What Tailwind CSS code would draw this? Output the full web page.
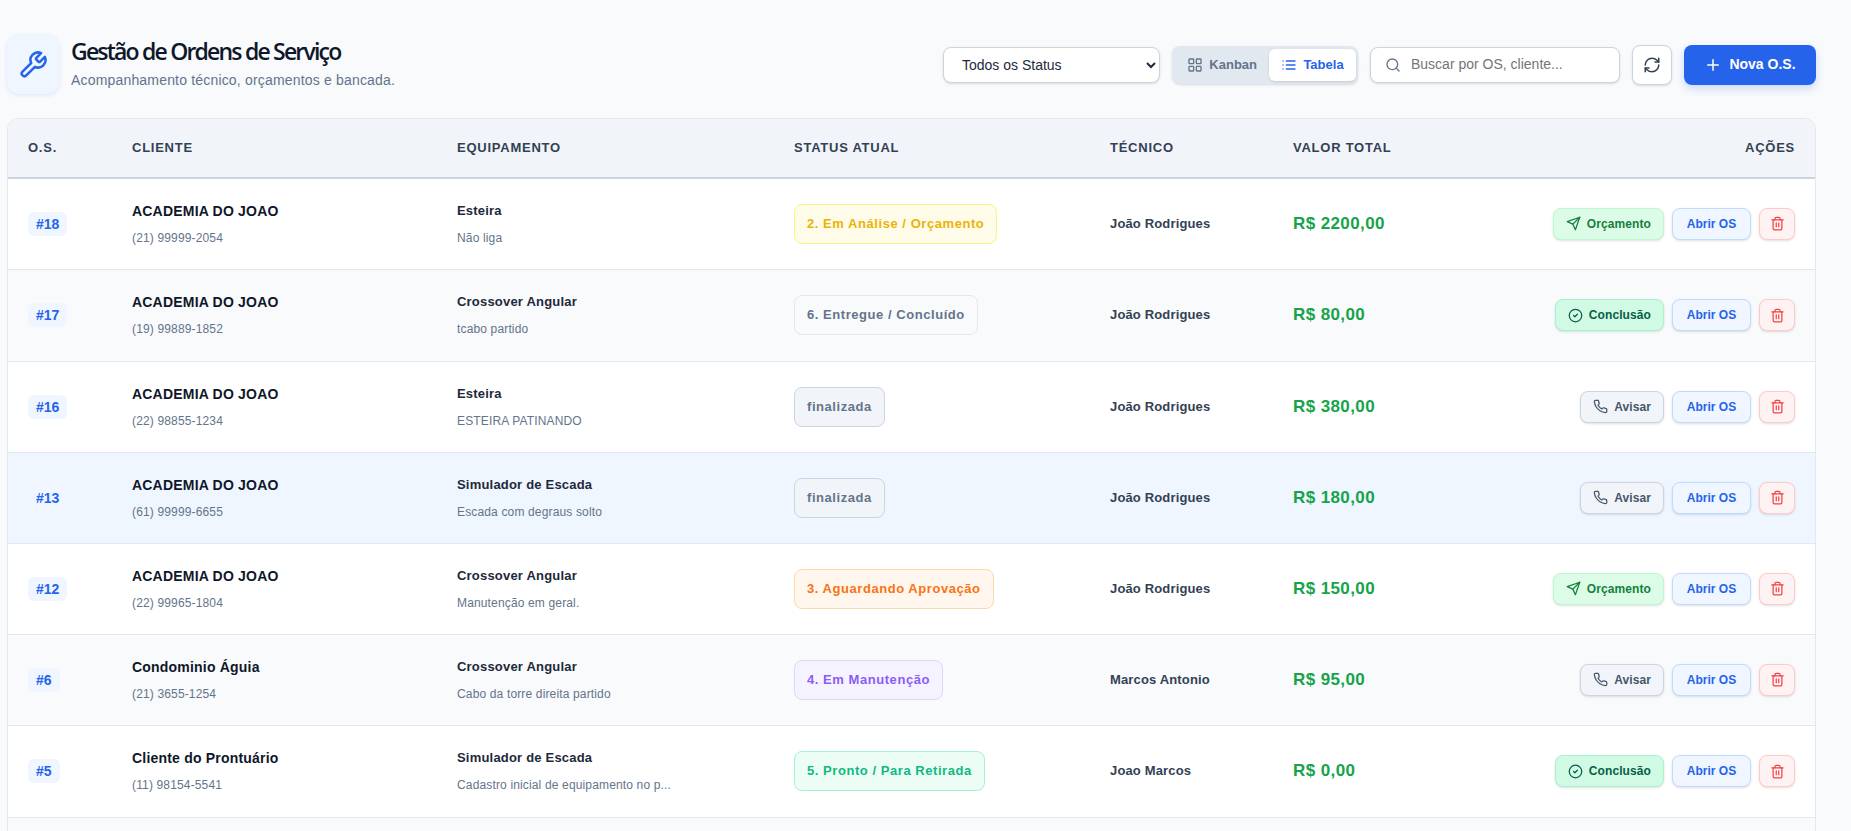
<!DOCTYPE html>
<html lang="pt-BR">
<head>
<meta charset="utf-8">
<title>Gestão de Ordens de Serviço</title>
<script src="https://cdn.jsdelivr.net/npm/@tailwindcss/browser@4"></script>
</head>
<body class="h-screen overflow-hidden bg-[#f8fafc] font-['Liberation_Sans',Arial,sans-serif]">
<svg class="hidden" xmlns="http://www.w3.org/2000/svg">
<symbol id="send" viewBox="0 0 24 24"><path d="m22 2-7 20-4-9-9-4Z"/><path d="M22 2 11 13"/></symbol>
<symbol id="check" viewBox="0 0 24 24"><circle cx="12" cy="12" r="10"/><path d="m9 12 2 2 4-4"/></symbol>
<symbol id="phone" viewBox="0 0 24 24"><path d="M22 16.92v3a2 2 0 0 1-2.18 2 19.79 19.79 0 0 1-8.63-3.07 19.5 19.5 0 0 1-6-6 19.79 19.79 0 0 1-3.07-8.67A2 2 0 0 1 4.11 2h3a2 2 0 0 1 2 1.72 12.84 12.84 0 0 0 .7 2.81 2 2 0 0 1-.45 2.11L8.09 9.91a16 16 0 0 0 6 6l1.27-1.27a2 2 0 0 1 2.11-.45 12.84 12.84 0 0 0 2.81.7A2 2 0 0 1 22 16.92z"/></symbol>
<symbol id="trash" viewBox="0 0 24 24"><path d="M3 6h18"/><path d="M19 6v14c0 1-1 2-2 2H7c-1 0-2-1-2-2V6"/><path d="M8 6V4c0-1 1-2 2-2h4c1 0 2 1 2 2v2"/><path d="M10 11v6"/><path d="M14 11v6"/></symbol>
</svg>
<div class="pl-[7px] pr-[35px] pt-[35px]">
  <header class="flex items-center justify-between h-[59px]">
    <div class="flex items-center gap-[12px]">
      <div class="flex h-[59px] w-[52px] items-center justify-center rounded-[12px] bg-[#eff6ff] shadow-[0_1px_4px_rgba(37,99,235,0.14)]">
        <svg class="h-[30px] w-[30px] text-[#2563eb]" viewBox="0 0 24 24" fill="none" stroke="currentColor" stroke-width="2" stroke-linecap="round" stroke-linejoin="round"><path d="M14.7 6.3a1 1 0 0 0 0 1.4l1.6 1.6a1 1 0 0 0 1.4 0l3.77-3.77a6 6 0 0 1-7.94 7.94l-6.91 6.91a2.12 2.12 0 0 1-3-3l6.91-6.91a6 6 0 0 1 7.94-7.94l-3.76 3.76z"/></svg>
      </div>
      <div class="pb-[2px]">
        <h1 class="font-['Open_Sans',sans-serif] text-[23px] leading-[26px] font-semibold tracking-[-1.8px] text-[#0f172a]">Gestão de Ordens de Serviço</h1>
        <p class="mt-[7px] text-[14px] leading-[18px] tracking-[0.18px] text-[#64748b]">Acompanhamento técnico, orçamentos e bancada.</p>
      </div>
    </div>
    <div class="flex items-center gap-[12px]">
      <select class="h-[36px] w-[217px] rounded-[8px] border border-[#cbd5e1] bg-white pl-[14px] pr-1 text-[14px] text-[#1e293b] shadow-sm">
        <option>Todos os Status</option>
      </select>
      <div class="flex h-[38px] w-[186px] items-center justify-end gap-[2px] rounded-[8px] bg-[#e2e8f0] p-[2px] shadow-sm">
        <button class="flex h-[32px] items-center gap-[6px] px-[10px] text-[13px] font-bold text-[#64748b]">
          <svg class="h-[16px] w-[16px]" viewBox="0 0 24 24" fill="none" stroke="currentColor" stroke-width="2" stroke-linecap="round" stroke-linejoin="round"><rect x="3" y="3" width="7" height="7" rx="1"/><rect x="14" y="3" width="7" height="7" rx="1"/><rect x="14" y="14" width="7" height="7" rx="1"/><rect x="3" y="14" width="7" height="7" rx="1"/></svg>
          Kanban
        </button>
        <button class="flex h-[32px] w-[87px] items-center justify-center gap-[6px] rounded-[6px] bg-white text-[13px] font-bold text-[#2563eb] shadow-sm">
          <svg class="h-[16px] w-[16px]" viewBox="0 0 24 24" fill="none" stroke="currentColor" stroke-width="2" stroke-linecap="round" stroke-linejoin="round"><path d="M3 12h.01"/><path d="M3 18h.01"/><path d="M3 6h.01"/><path d="M8 12h13"/><path d="M8 18h13"/><path d="M8 6h13"/></svg>
          Tabela
        </button>
      </div>
      <label class="flex h-[36px] w-[250px] items-center gap-[10px] rounded-[8px] border border-[#cbd5e1] bg-white pl-[14px] shadow-sm">
        <svg class="h-[16px] w-[16px] shrink-0 text-[#64748b]" viewBox="0 0 24 24" fill="none" stroke="currentColor" stroke-width="2" stroke-linecap="round" stroke-linejoin="round"><circle cx="11" cy="11" r="8"/><path d="m21 21-4.3-4.3"/></svg>
        <input class="w-full bg-transparent text-[14px] outline-none placeholder:text-[#757575]" placeholder="Buscar por OS, cliente...">
      </label>
      <button class="flex h-[40px] w-[40px] items-center justify-center rounded-[8px] border border-[#cbd5e1] bg-white text-[#334155] shadow-sm">
        <svg class="h-[18px] w-[18px]" viewBox="0 0 24 24" fill="none" stroke="currentColor" stroke-width="2" stroke-linecap="round" stroke-linejoin="round"><path d="M3 12a9 9 0 0 1 9-9 9.75 9.75 0 0 1 6.74 2.74L21 8"/><path d="M21 3v5h-5"/><path d="M21 12a9 9 0 0 1-9 9 9.75 9.75 0 0 1-6.74-2.74L3 16"/><path d="M8 16H3v5"/></svg>
      </button>
      <button class="flex h-[40px] w-[132px] items-center justify-center gap-[7px] rounded-[8px] bg-[#2563eb] text-[14px] font-bold text-white shadow-[0_4px_8px_rgba(37,99,235,0.2)]">
        <svg class="h-[18px] w-[18px]" viewBox="0 0 24 24" fill="none" stroke="currentColor" stroke-width="2" stroke-linecap="round" stroke-linejoin="round"><path d="M5 12h14"/><path d="M12 5v14"/></svg>
        Nova O.S.
      </button>
    </div>
  </header>

  <div class="mt-[24px] overflow-hidden rounded-t-[12px] border border-b-0 border-[#e2e8f0] bg-white">
    <table class="w-full table-fixed border-collapse">
      <colgroup>
        <col class="w-[103px]"><col class="w-[325px]"><col class="w-[337px]"><col class="w-[316px]"><col class="w-[183px]"><col class="w-[210px]"><col>
      </colgroup>
      <thead>
        <tr class="h-[59px] border-b-2 border-[#cbd5e1] bg-[#f1f5f9] text-left text-[13px] font-extrabold uppercase tracking-[0.75px] text-[#334155]">
          <th class="pl-[20px]">O.S.</th><th class="pl-[21px]">Cliente</th><th class="pl-[21px]">Equipamento</th><th class="pl-[21px]">Status Atual</th><th class="pl-[21px]">Técnico</th><th class="pl-[21px]">Valor Total</th><th class="pr-[20px] text-right">Ações</th>
        </tr>
      </thead>
      <tbody>
        <tr class="h-[91px] border-b border-[#e2e8f0] bg-white">
          <td class="pl-[20px]"><span class="inline-block rounded-[6px] bg-[#eff6ff] px-[8px] py-[4px] text-[14px] leading-[16px] font-bold text-[#2563eb]">#18</span></td>
          <td class="pl-[21px]"><div class="text-[14px] leading-[18px] font-bold tracking-[0.2px] text-[#0f172a]">ACADEMIA DO JOAO</div><div class="mt-[10px] text-[12px] leading-[16px] tracking-[0.15px] text-[#64748b]">(21) 99999-2054</div></td>
          <td class="pl-[21px]"><div class="text-[13px] leading-[18px] font-semibold tracking-[0.2px] text-[#1e293b]">Esteira</div><div class="mt-[10px] text-[12px] leading-[16px] tracking-[0.15px] text-[#64748b]">Não liga</div></td>
          <td class="pl-[21px]"><span class="inline-block rounded-[8px] border border-[#fef08a] bg-[#fefce8] px-[12px] py-[11px] text-[13px] leading-[16px] font-bold tracking-[0.55px] text-[#eab308]">2. Em Análise / Orçamento</span></td>
          <td class="pl-[21px] text-[13px] font-semibold tracking-[0.15px] text-[#334155]">João Rodrigues</td>
          <td class="pl-[21px] text-[17px] font-bold tracking-[0.4px] text-[#16a34a]">R$ 2200,00</td>
          <td class="pr-[20px]"><div class="flex items-center justify-end gap-[8px]">
            <button class="flex h-[32px] items-center gap-[6px] rounded-[8px] border border-[#bbf7d0] bg-[#dcfce7] px-[12px] text-[12px] font-semibold tracking-[0.1px] text-[#15803d] shadow-sm"><svg class="h-[15px] w-[15px]" fill="none" stroke="currentColor" stroke-width="2" stroke-linecap="round" stroke-linejoin="round"><use href="#send"/></svg>Orçamento</button>
            <button class="h-[32px] w-[79px] rounded-[8px] border border-[#bfdbfe] bg-[#eff6ff] text-[12px] font-semibold text-[#2563eb] shadow-sm">Abrir OS</button>
            <button class="flex h-[32px] w-[36px] items-center justify-center rounded-[8px] border border-[#fecaca] bg-[#fef2f2] text-[#ef4444] shadow-sm"><svg class="h-[15px] w-[15px]" fill="none" stroke="currentColor" stroke-width="2" stroke-linecap="round" stroke-linejoin="round"><use href="#trash"/></svg></button>
          </div></td>
        </tr>
        <tr class="h-[92px] border-b border-[#e2e8f0] bg-[#f8fafc]">
          <td class="pl-[20px]"><span class="inline-block rounded-[6px] bg-[#eff6ff] px-[8px] py-[4px] text-[14px] leading-[16px] font-bold text-[#2563eb]">#17</span></td>
          <td class="pl-[21px]"><div class="text-[14px] leading-[18px] font-bold tracking-[0.2px] text-[#0f172a]">ACADEMIA DO JOAO</div><div class="mt-[10px] text-[12px] leading-[16px] tracking-[0.15px] text-[#64748b]">(19) 99889-1852</div></td>
          <td class="pl-[21px]"><div class="text-[13px] leading-[18px] font-semibold tracking-[0.2px] text-[#1e293b]">Crossover Angular</div><div class="mt-[10px] text-[12px] leading-[16px] tracking-[0.15px] text-[#64748b]">tcabo partido</div></td>
          <td class="pl-[21px]"><span class="inline-block rounded-[8px] border border-[#e2e8f0] bg-[#f8fafc] px-[12px] py-[11px] text-[13px] leading-[16px] font-bold tracking-[0.55px] text-[#64748b]">6. Entregue / Concluído</span></td>
          <td class="pl-[21px] text-[13px] font-semibold tracking-[0.15px] text-[#334155]">João Rodrigues</td>
          <td class="pl-[21px] text-[17px] font-bold tracking-[0.4px] text-[#16a34a]">R$ 80,00</td>
          <td class="pr-[20px]"><div class="flex items-center justify-end gap-[8px]">
            <button class="flex h-[32px] items-center gap-[6px] rounded-[8px] border border-[#a7f3d0] bg-[#d1fae5] px-[12px] text-[12px] font-semibold tracking-[0.1px] text-[#065f46] shadow-sm"><svg class="h-[15px] w-[15px]" fill="none" stroke="currentColor" stroke-width="2" stroke-linecap="round" stroke-linejoin="round"><use href="#check"/></svg>Conclusão</button>
            <button class="h-[32px] w-[79px] rounded-[8px] border border-[#bfdbfe] bg-[#eff6ff] text-[12px] font-semibold text-[#2563eb] shadow-sm">Abrir OS</button>
            <button class="flex h-[32px] w-[36px] items-center justify-center rounded-[8px] border border-[#fecaca] bg-[#fef2f2] text-[#ef4444] shadow-sm"><svg class="h-[15px] w-[15px]" fill="none" stroke="currentColor" stroke-width="2" stroke-linecap="round" stroke-linejoin="round"><use href="#trash"/></svg></button>
          </div></td>
        </tr>
        <tr class="h-[91px] border-b border-[#e2e8f0] bg-white">
          <td class="pl-[20px]"><span class="inline-block rounded-[6px] bg-[#eff6ff] px-[8px] py-[4px] text-[14px] leading-[16px] font-bold text-[#2563eb]">#16</span></td>
          <td class="pl-[21px]"><div class="text-[14px] leading-[18px] font-bold tracking-[0.2px] text-[#0f172a]">ACADEMIA DO JOAO</div><div class="mt-[10px] text-[12px] leading-[16px] tracking-[0.15px] text-[#64748b]">(22) 98855-1234</div></td>
          <td class="pl-[21px]"><div class="text-[13px] leading-[18px] font-semibold tracking-[0.2px] text-[#1e293b]">Esteira</div><div class="mt-[10px] text-[12px] leading-[16px] tracking-[0.15px] text-[#64748b]">ESTEIRA PATINANDO</div></td>
          <td class="pl-[21px]"><span class="inline-block rounded-[8px] border border-[#cbd5e1] bg-[#f1f5f9] px-[12px] py-[11px] text-[13px] leading-[16px] font-bold tracking-[0.55px] text-[#64748b]">finalizada</span></td>
          <td class="pl-[21px] text-[13px] font-semibold tracking-[0.15px] text-[#334155]">João Rodrigues</td>
          <td class="pl-[21px] text-[17px] font-bold tracking-[0.4px] text-[#16a34a]">R$ 380,00</td>
          <td class="pr-[20px]"><div class="flex items-center justify-end gap-[8px]">
            <button class="flex h-[32px] items-center gap-[6px] rounded-[8px] border border-[#cbd5e1] bg-[#f1f5f9] px-[12px] text-[12px] font-semibold tracking-[0.1px] text-[#475569] shadow-sm"><svg class="h-[15px] w-[15px]" fill="none" stroke="currentColor" stroke-width="2" stroke-linecap="round" stroke-linejoin="round"><use href="#phone"/></svg>Avisar</button>
            <button class="h-[32px] w-[79px] rounded-[8px] border border-[#bfdbfe] bg-[#eff6ff] text-[12px] font-semibold text-[#2563eb] shadow-sm">Abrir OS</button>
            <button class="flex h-[32px] w-[36px] items-center justify-center rounded-[8px] border border-[#fecaca] bg-[#fef2f2] text-[#ef4444] shadow-sm"><svg class="h-[15px] w-[15px]" fill="none" stroke="currentColor" stroke-width="2" stroke-linecap="round" stroke-linejoin="round"><use href="#trash"/></svg></button>
          </div></td>
        </tr>
        <tr class="h-[91px] border-b border-[#e2e8f0] bg-[#eff6ff]">
          <td class="pl-[20px]"><span class="inline-block rounded-[6px] bg-[#eff6ff] px-[8px] py-[4px] text-[14px] leading-[16px] font-bold text-[#2563eb]">#13</span></td>
          <td class="pl-[21px]"><div class="text-[14px] leading-[18px] font-bold tracking-[0.2px] text-[#0f172a]">ACADEMIA DO JOAO</div><div class="mt-[10px] text-[12px] leading-[16px] tracking-[0.15px] text-[#64748b]">(61) 99999-6655</div></td>
          <td class="pl-[21px]"><div class="text-[13px] leading-[18px] font-semibold tracking-[0.2px] text-[#1e293b]">Simulador de Escada</div><div class="mt-[10px] text-[12px] leading-[16px] tracking-[0.15px] text-[#64748b]">Escada com degraus solto</div></td>
          <td class="pl-[21px]"><span class="inline-block rounded-[8px] border border-[#cbd5e1] bg-[#f1f5f9] px-[12px] py-[11px] text-[13px] leading-[16px] font-bold tracking-[0.55px] text-[#64748b]">finalizada</span></td>
          <td class="pl-[21px] text-[13px] font-semibold tracking-[0.15px] text-[#334155]">João Rodrigues</td>
          <td class="pl-[21px] text-[17px] font-bold tracking-[0.4px] text-[#16a34a]">R$ 180,00</td>
          <td class="pr-[20px]"><div class="flex items-center justify-end gap-[8px]">
            <button class="flex h-[32px] items-center gap-[6px] rounded-[8px] border border-[#cbd5e1] bg-[#f1f5f9] px-[12px] text-[12px] font-semibold tracking-[0.1px] text-[#475569] shadow-sm"><svg class="h-[15px] w-[15px]" fill="none" stroke="currentColor" stroke-width="2" stroke-linecap="round" stroke-linejoin="round"><use href="#phone"/></svg>Avisar</button>
            <button class="h-[32px] w-[79px] rounded-[8px] border border-[#bfdbfe] bg-[#eff6ff] text-[12px] font-semibold text-[#2563eb] shadow-sm">Abrir OS</button>
            <button class="flex h-[32px] w-[36px] items-center justify-center rounded-[8px] border border-[#fecaca] bg-[#fef2f2] text-[#ef4444] shadow-sm"><svg class="h-[15px] w-[15px]" fill="none" stroke="currentColor" stroke-width="2" stroke-linecap="round" stroke-linejoin="round"><use href="#trash"/></svg></button>
          </div></td>
        </tr>
        <tr class="h-[91px] border-b border-[#e2e8f0] bg-white">
          <td class="pl-[20px]"><span class="inline-block rounded-[6px] bg-[#eff6ff] px-[8px] py-[4px] text-[14px] leading-[16px] font-bold text-[#2563eb]">#12</span></td>
          <td class="pl-[21px]"><div class="text-[14px] leading-[18px] font-bold tracking-[0.2px] text-[#0f172a]">ACADEMIA DO JOAO</div><div class="mt-[10px] text-[12px] leading-[16px] tracking-[0.15px] text-[#64748b]">(22) 99965-1804</div></td>
          <td class="pl-[21px]"><div class="text-[13px] leading-[18px] font-semibold tracking-[0.2px] text-[#1e293b]">Crossover Angular</div><div class="mt-[10px] text-[12px] leading-[16px] tracking-[0.15px] text-[#64748b]">Manutenção em geral.</div></td>
          <td class="pl-[21px]"><span class="inline-block rounded-[8px] border border-[#fed7aa] bg-[#fff7ed] px-[12px] py-[11px] text-[13px] leading-[16px] font-bold tracking-[0.55px] text-[#f97316]">3. Aguardando Aprovação</span></td>
          <td class="pl-[21px] text-[13px] font-semibold tracking-[0.15px] text-[#334155]">João Rodrigues</td>
          <td class="pl-[21px] text-[17px] font-bold tracking-[0.4px] text-[#16a34a]">R$ 150,00</td>
          <td class="pr-[20px]"><div class="flex items-center justify-end gap-[8px]">
            <button class="flex h-[32px] items-center gap-[6px] rounded-[8px] border border-[#bbf7d0] bg-[#dcfce7] px-[12px] text-[12px] font-semibold tracking-[0.1px] text-[#15803d] shadow-sm"><svg class="h-[15px] w-[15px]" fill="none" stroke="currentColor" stroke-width="2" stroke-linecap="round" stroke-linejoin="round"><use href="#send"/></svg>Orçamento</button>
            <button class="h-[32px] w-[79px] rounded-[8px] border border-[#bfdbfe] bg-[#eff6ff] text-[12px] font-semibold text-[#2563eb] shadow-sm">Abrir OS</button>
            <button class="flex h-[32px] w-[36px] items-center justify-center rounded-[8px] border border-[#fecaca] bg-[#fef2f2] text-[#ef4444] shadow-sm"><svg class="h-[15px] w-[15px]" fill="none" stroke="currentColor" stroke-width="2" stroke-linecap="round" stroke-linejoin="round"><use href="#trash"/></svg></button>
          </div></td>
        </tr>
        <tr class="h-[91px] border-b border-[#e2e8f0] bg-[#f8fafc]">
          <td class="pl-[20px]"><span class="inline-block rounded-[6px] bg-[#eff6ff] px-[8px] py-[4px] text-[14px] leading-[16px] font-bold text-[#2563eb]">#6</span></td>
          <td class="pl-[21px]"><div class="text-[14px] leading-[18px] font-bold tracking-[0.2px] text-[#0f172a]">Condominio Águia</div><div class="mt-[10px] text-[12px] leading-[16px] tracking-[0.15px] text-[#64748b]">(21) 3655-1254</div></td>
          <td class="pl-[21px]"><div class="text-[13px] leading-[18px] font-semibold tracking-[0.2px] text-[#1e293b]">Crossover Angular</div><div class="mt-[10px] text-[12px] leading-[16px] tracking-[0.15px] text-[#64748b]">Cabo da torre direita partido</div></td>
          <td class="pl-[21px]"><span class="inline-block rounded-[8px] border border-[#ddd6fe] bg-[#f5f3ff] px-[12px] py-[11px] text-[13px] leading-[16px] font-bold tracking-[0.55px] text-[#8b5cf6]">4. Em Manutenção</span></td>
          <td class="pl-[21px] text-[13px] font-semibold tracking-[0.15px] text-[#334155]">Marcos Antonio</td>
          <td class="pl-[21px] text-[17px] font-bold tracking-[0.4px] text-[#16a34a]">R$ 95,00</td>
          <td class="pr-[20px]"><div class="flex items-center justify-end gap-[8px]">
            <button class="flex h-[32px] items-center gap-[6px] rounded-[8px] border border-[#cbd5e1] bg-[#f1f5f9] px-[12px] text-[12px] font-semibold tracking-[0.1px] text-[#475569] shadow-sm"><svg class="h-[15px] w-[15px]" fill="none" stroke="currentColor" stroke-width="2" stroke-linecap="round" stroke-linejoin="round"><use href="#phone"/></svg>Avisar</button>
            <button class="h-[32px] w-[79px] rounded-[8px] border border-[#bfdbfe] bg-[#eff6ff] text-[12px] font-semibold text-[#2563eb] shadow-sm">Abrir OS</button>
            <button class="flex h-[32px] w-[36px] items-center justify-center rounded-[8px] border border-[#fecaca] bg-[#fef2f2] text-[#ef4444] shadow-sm"><svg class="h-[15px] w-[15px]" fill="none" stroke="currentColor" stroke-width="2" stroke-linecap="round" stroke-linejoin="round"><use href="#trash"/></svg></button>
          </div></td>
        </tr>
        <tr class="h-[92px] border-b border-[#e2e8f0] bg-white">
          <td class="pl-[20px]"><span class="inline-block rounded-[6px] bg-[#eff6ff] px-[8px] py-[4px] text-[14px] leading-[16px] font-bold text-[#2563eb]">#5</span></td>
          <td class="pl-[21px]"><div class="text-[14px] leading-[18px] font-bold tracking-[0.2px] text-[#0f172a]">Cliente do Prontuário</div><div class="mt-[10px] text-[12px] leading-[16px] tracking-[0.15px] text-[#64748b]">(11) 98154-5541</div></td>
          <td class="pl-[21px]"><div class="text-[13px] leading-[18px] font-semibold tracking-[0.2px] text-[#1e293b]">Simulador de Escada</div><div class="mt-[10px] text-[12px] leading-[16px] tracking-[0.15px] text-[#64748b]">Cadastro inicial de equipamento no p...</div></td>
          <td class="pl-[21px]"><span class="inline-block rounded-[8px] border border-[#a7f3d0] bg-[#ecfdf5] px-[12px] py-[11px] text-[13px] leading-[16px] font-bold tracking-[0.55px] text-[#10b981]">5. Pronto / Para Retirada</span></td>
          <td class="pl-[21px] text-[13px] font-semibold tracking-[0.15px] text-[#334155]">Joao Marcos</td>
          <td class="pl-[21px] text-[17px] font-bold tracking-[0.4px] text-[#16a34a]">R$ 0,00</td>
          <td class="pr-[20px]"><div class="flex items-center justify-end gap-[8px]">
            <button class="flex h-[32px] items-center gap-[6px] rounded-[8px] border border-[#a7f3d0] bg-[#d1fae5] px-[12px] text-[12px] font-semibold tracking-[0.1px] text-[#065f46] shadow-sm"><svg class="h-[15px] w-[15px]" fill="none" stroke="currentColor" stroke-width="2" stroke-linecap="round" stroke-linejoin="round"><use href="#check"/></svg>Conclusão</button>
            <button class="h-[32px] w-[79px] rounded-[8px] border border-[#bfdbfe] bg-[#eff6ff] text-[12px] font-semibold text-[#2563eb] shadow-sm">Abrir OS</button>
            <button class="flex h-[32px] w-[36px] items-center justify-center rounded-[8px] border border-[#fecaca] bg-[#fef2f2] text-[#ef4444] shadow-sm"><svg class="h-[15px] w-[15px]" fill="none" stroke="currentColor" stroke-width="2" stroke-linecap="round" stroke-linejoin="round"><use href="#trash"/></svg></button>
          </div></td>
        </tr>
        <tr class="h-[14px] bg-[#f8fafc]"><td colspan="7"></td></tr>
      </tbody>
    </table>
  </div>
</div>
</body>
</html>
